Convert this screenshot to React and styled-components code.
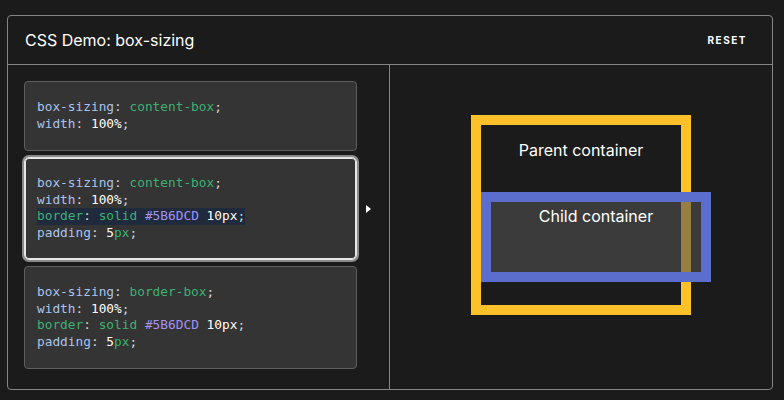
import React from 'react';
import styled, { createGlobalStyle } from 'styled-components';

const GlobalStyle = createGlobalStyle`
  html, body {
    margin: 0;
    background: #1b1b1b;
  }
  body {
    font-family: Inter, "Noto Sans", sans-serif;
    color: #fff;
  }
`;

const Page = styled.div`
  padding: 15px 11px 0 7px;
`;

const Card = styled.section`
  border: 1px solid #858585;
  border-radius: 4px;
  background: #1b1b1b;
  height: 375px;
  box-sizing: border-box;
  display: flex;
  flex-direction: column;
`;

const Header = styled.header`
  height: 48px;
  border-bottom: 1px solid #858585;
  display: flex;
  align-items: center;
  justify-content: space-between;
  padding: 0 25px 0 17px;
  flex-shrink: 0;

  h2 {
    margin: 0;
    font-size: 16px;
    font-weight: 400;
    color: #fff;
  }
`;

const ResetButton = styled.button`
  background: none;
  border: none;
  padding: 0;
  color: #fff;
  font-family: Inter, sans-serif;
  font-size: 10px;
  font-weight: 700;
  letter-spacing: 1.5px;
  text-transform: uppercase;
  cursor: pointer;
`;

const Body = styled.div`
  flex: 1;
  display: grid;
  grid-template-columns: 1fr 1fr;
  min-height: 0;
`;

const Choices = styled.div`
  border-right: 1px solid #858585;
  padding: 16px 0 0 16px;
  display: flex;
  flex-direction: column;
  gap: 5px;
`;

const ChoiceRow = styled.div`
  display: flex;
  align-items: center;
  gap: 9px;
`;

const CodeBlock = styled.pre`
  margin: 0;
  width: 333px;
  box-sizing: border-box;
  padding: 17px 12px 18px;
  background: #343434;
  border: 1px solid ${({ $selected }) => ($selected ? '#e6e6e6' : '#5e5e5e')};
  border-radius: ${({ $selected }) => ($selected ? '5px' : '4px')};
  box-shadow: ${({ $selected }) =>
    $selected ? 'inset 0 0 0 1px #e6e6e6, 0 0 0 2px #8a8a8a' : 'none'};
  margin-top: ${({ $selected }) => ($selected ? '1px' : '0')};
  margin-bottom: ${({ $selected }) => ($selected ? '1px' : '0')};
  font-family: "DejaVu Sans Mono", "Liberation Mono", monospace;
  font-size: 12.8px;
  line-height: 16.5px;
  color: #d6d6d6;
`;

const Line = styled.span`
  display: ${({ $hl }) => ($hl ? 'inline-block' : 'inline')};
  background: ${({ $hl }) => ($hl ? '#1f2a3d' : 'transparent')};
`;

const Prop = styled.span`
  color: ${({ $green }) => ($green ? '#3cb072' : '#a9c3ec')};
`;

const Val = styled.span`
  color: #3cb072;
`;

const Num = styled.span`
  color: #ffffff;
`;

const Hex = styled.span`
  color: #a592f2;
`;

const Arrow = styled.span`
  width: 0;
  height: 0;
  border-top: 4px solid transparent;
  border-bottom: 4px solid transparent;
  border-left: 5px solid #fff;
  visibility: ${({ $show }) => ($show ? 'visible' : 'hidden')};
`;

const Output = styled.div`
  display: flex;
  align-items: center;
  justify-content: center;
  padding-bottom: 24px;
`;

const Parent = styled.div`
  width: 220px;
  height: 200px;
  box-sizing: border-box;
  border: 10px solid #ffc129;

  p {
    margin: 16px 0;
    text-align: center;
    font-size: 16px;
    line-height: 19px;
    color: #fff;
  }
`;

const Child = styled.div`
  width: 100%;
  height: 60px;
  margin-top: 32px;
  padding: 5px;
  border: 10px solid #5b6dcd;
  background: rgba(81, 81, 81, 0.6);

  p {
    margin: 0;
  }
`;

function Decl({ name, green, children, hl }) {
  return (
    <Line $hl={hl}>
      <Prop $green={green}>{name}</Prop>: {children};
    </Line>
  );
}

function App() {
  return (
    <>
      <GlobalStyle />
      <Page>
        <Card>
          <Header>
            <h2>CSS Demo: box-sizing</h2>
            <ResetButton>Reset</ResetButton>
          </Header>
          <Body>
            <Choices>
              <ChoiceRow>
                <CodeBlock>
                  <Decl name="box-sizing"><Val>content-box</Val></Decl>{'\n'}
                  <Decl name="width"><Num>100%</Num></Decl>
                </CodeBlock>
                <Arrow />
              </ChoiceRow>
              <ChoiceRow>
                <CodeBlock $selected>
                  <Decl name="box-sizing"><Val>content-box</Val></Decl>{'\n'}
                  <Decl name="width"><Num>100%</Num></Decl>{'\n'}
                  <Decl name="border" green hl>
                    <Val>solid</Val> <Hex>#5B6DCD</Hex> <Num>10px</Num>
                  </Decl>{'\n'}
                  <Decl name="padding"><Num>5</Num><Val>px</Val></Decl>
                </CodeBlock>
                <Arrow $show />
              </ChoiceRow>
              <ChoiceRow>
                <CodeBlock>
                  <Decl name="box-sizing"><Val>border-box</Val></Decl>{'\n'}
                  <Decl name="width"><Num>100%</Num></Decl>{'\n'}
                  <Decl name="border" green>
                    <Val>solid</Val> <Hex>#5B6DCD</Hex> <Num>10px</Num>
                  </Decl>{'\n'}
                  <Decl name="padding"><Num>5</Num><Val>px</Val></Decl>
                </CodeBlock>
                <Arrow />
              </ChoiceRow>
            </Choices>
            <Output>
              <Parent>
                <p>Parent container</p>
                <Child>
                  <p>Child container</p>
                </Child>
              </Parent>
            </Output>
          </Body>
        </Card>
      </Page>
    </>
  );
}

export default App;
